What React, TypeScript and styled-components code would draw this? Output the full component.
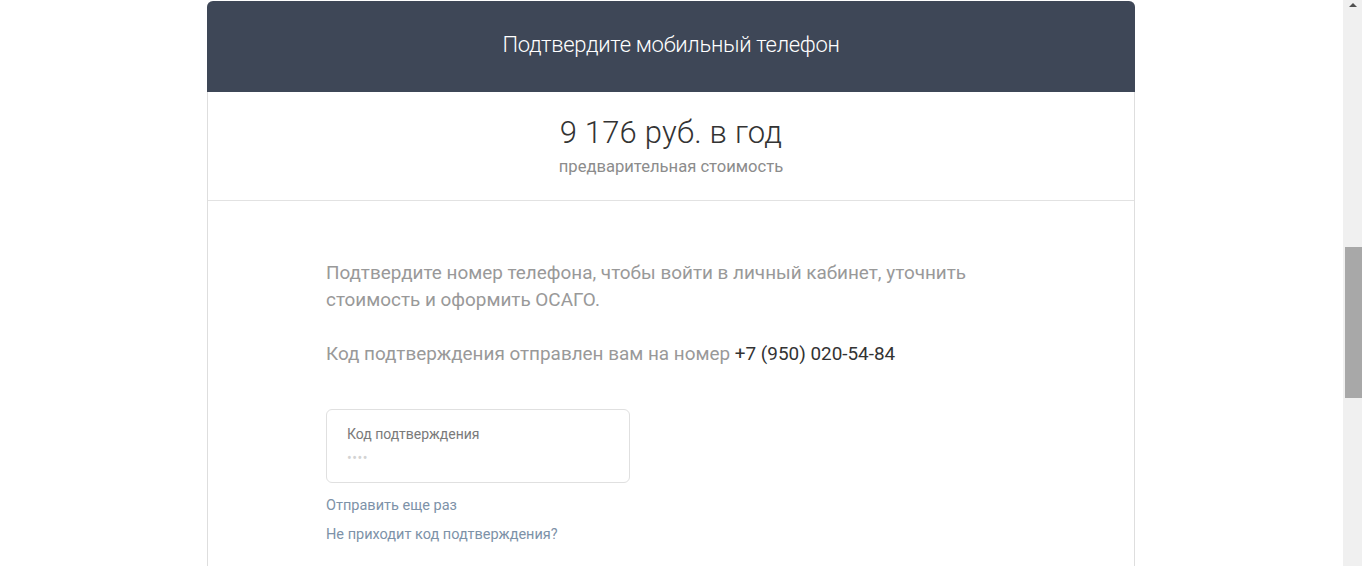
import React from "react";
import styled, { createGlobalStyle } from "styled-components";

const GlobalStyle = createGlobalStyle`
  html, body {
    margin: 0;
    padding: 0;
    height: 566px;
    overflow: hidden;
    background: #ffffff;
    font-family: Roboto, "Liberation Sans", Arial, sans-serif;
  }
`;

// page + fake browser scrollbar on the right
export default function App() {
  return (
    <>
      <GlobalStyle />
      <Page>
        <Main>
          <Card>
            <Header>
              <HeaderTitle>Подтвердите мобильный телефон</HeaderTitle>
            </Header>
            <PriceSection>
              <Price>9 176 руб. в год</Price>
              <PriceNote>предварительная стоимость</PriceNote>
            </PriceSection>
            <Body>
              <Content>
                <Text>
                  Подтвердите номер телефона, чтобы войти в личный кабинет,
                  уточнить стоимость и оформить ОСАГО.
                </Text>
                <Text>
                  Код подтверждения отправлен вам на номер{" "}
                  <Phone>+7 (950) 020-54-84</Phone>
                </Text>
                <CodeField>
                  <FieldLabel>Код подтверждения</FieldLabel>
                  <FieldInput placeholder="••••" />
                </CodeField>
                <Links>
                  <TextLink href="#">Отправить еще раз</TextLink>
                  <TextLink href="#">Не приходит код подтверждения?</TextLink>
                </Links>
              </Content>
            </Body>
          </Card>
        </Main>
        <Scrollbar>
          <ScrollArrow />
          <ScrollThumb />
        </Scrollbar>
      </Page>
    </>
  );
}

const Page = styled.div`
  display: flex;
  height: 566px;
`;

const Main = styled.div`
  flex: 1;
  padding: 1px 1px 0 0;
  overflow: hidden;
`;

const Card = styled.section`
  max-width: 928px;
  margin: 0 auto;
  min-height: 700px;
  box-sizing: border-box;
  border-left: 1px solid #dedede;
  border-right: 1px solid #dedede;
  border-radius: 6px 6px 0 0;
  background: #fff;
`;

const Header = styled.header`
  height: 91px;
  background: #3e4757;
  border-radius: 6px 6px 0 0;
  margin: 0 -1px;
  display: flex;
  align-items: center;
  justify-content: center;
`;

const HeaderTitle = styled.h1`
  margin: 0 0 4px;
  font-size: 22px;
  font-weight: 300;
  color: #fff;
  letter-spacing: -0.3px;
`;

const PriceSection = styled.div`
  height: 109px;
  border-bottom: 1px solid #e2e2e2;
  display: flex;
  flex-direction: column;
  align-items: center;
  padding-top: 23px;
  box-sizing: border-box;
`;

const Price = styled.div`
  font-size: 31px;
  font-weight: 300;
  color: #333;
  line-height: 36px;
  letter-spacing: 0.2px;
`;

const PriceNote = styled.div`
  margin-top: 6px;
  font-size: 16.6px;
  color: #8c8c8c;
  line-height: 20px;
`;

const Body = styled.div`
  display: flex;
  justify-content: center;
  padding-top: 58px;
`;

const Content = styled.div`
  width: 690px;
  display: flex;
  flex-direction: column;
  align-items: flex-start;
`;

const Text = styled.p`
  margin: 0 0 27px;
  font-size: 18.9px;
  line-height: 27px;
  color: #999;
`;

const Phone = styled.span`
  color: #333;
`;

const CodeField = styled.label`
  margin-top: 15px;
  width: 304px;
  height: 74px;
  box-sizing: border-box;
  border: 1px solid #e0e0e0;
  border-radius: 6px;
  padding: 15px 20px 0;
  display: flex;
  flex-direction: column;
`;

const FieldLabel = styled.span`
  font-size: 14px;
  line-height: 18px;
  color: #7a7a7a;
`;

const FieldInput = styled.input`
  margin-top: 7px;
  border: none;
  outline: none;
  padding: 0;
  font-size: 14px;
  font-family: inherit;
  color: #333;
  &::placeholder {
    color: #d3d3d3;
    letter-spacing: 0.5px;
  }
`;

const Links = styled.div`
  margin-top: 14px;
  display: flex;
  flex-direction: column;
  gap: 11px;
`;

const TextLink = styled.a`
  font-size: 14.5px;
  line-height: 18px;
  color: #7d92a8;
  text-decoration: none;
`;

const Scrollbar = styled.div`
  width: 19px;
  flex-shrink: 0;
  background: #f0f0f0;
  display: flex;
  flex-direction: column;
  align-items: flex-end;
`;

const ScrollArrow = styled.div`
  align-self: center;
  margin-top: 3px;
  width: 0;
  height: 0;
  border-left: 4px solid transparent;
  border-right: 4px solid transparent;
  border-bottom: 4px solid #505050;
`;

const ScrollThumb = styled.div`
  margin-top: 240px;
  width: 17px;
  height: 151px;
  background: #a8a8a8;
`;
